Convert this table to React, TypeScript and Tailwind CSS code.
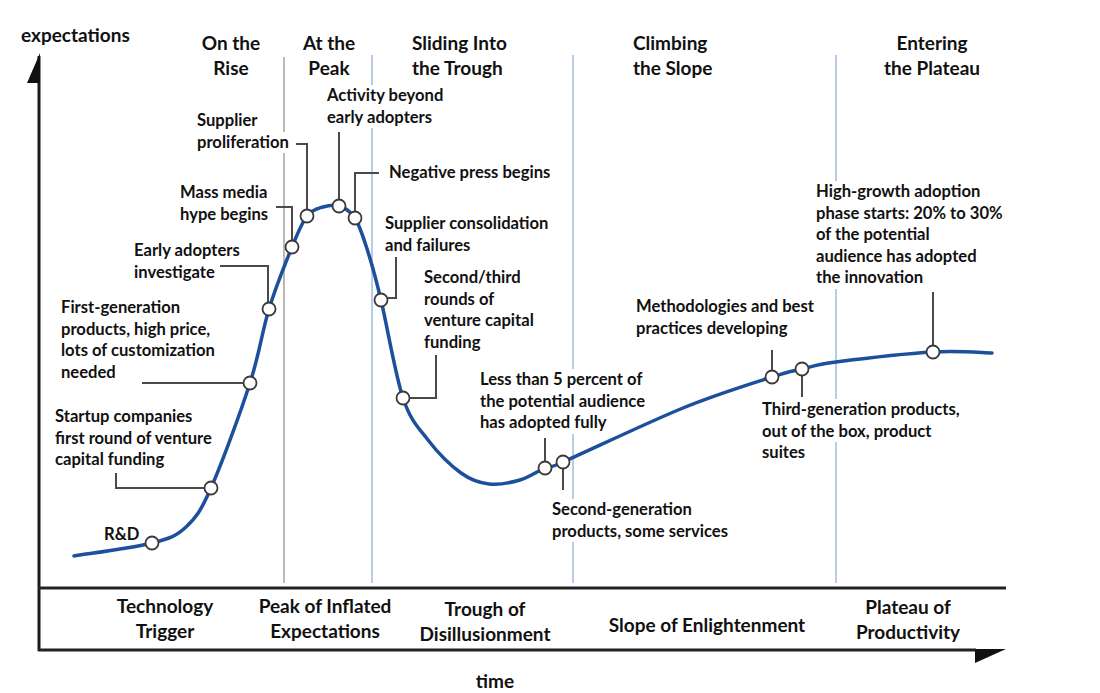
import React from 'react'

type Pt = [number, number]

// points the curve runs through (circles sit on some of them)
const curvePts: Pt[] = [
  [74, 556], [152, 543], [186, 527], [211, 488], [250, 383], [269, 309], [292, 247],
  [307, 216], [323, 207], [339, 206], [355, 218], [368, 252], [381, 300], [403, 398],
  [428, 440], [461, 473], [489, 484], [520, 480], [545, 468], [563, 462], [683, 408],
  [772, 377], [802, 369], [836, 362], [933, 352], [992, 353],
]

const toPath = (pts: Pt[]) => {
  let d = `M${pts[0][0]},${pts[0][1]}`
  for (let i = 0; i < pts.length - 1; i++) {
    const p0 = pts[i - 1] ?? pts[i]
    const p1 = pts[i]
    const p2 = pts[i + 1]
    const p3 = pts[i + 2] ?? p2
    const c1x = p1[0] + (p2[0] - p0[0]) / 6
    const c1y = p1[1] + (p2[1] - p0[1]) / 6
    const c2x = p2[0] - (p3[0] - p1[0]) / 6
    const c2y = p2[1] - (p3[1] - p1[1]) / 6
    d += ` C${c1x},${c1y} ${c2x},${c2y} ${p2[0]},${p2[1]}`
  }
  return d
}

const dots: Pt[] = [
  [152, 543], [211, 488], [250, 383], [269, 309], [292, 247], [307, 216], [339, 206],
  [355, 218], [381, 300], [403, 398], [545, 468], [563, 462], [772, 377], [802, 369], [933, 352],
]

const leaders = [
  'M116,473 V488 H205',
  'M142,383 H244',
  'M220,266 H268 V303',
  'M276,207 H292 V241',
  'M296,144 H307 V210',
  'M339,132 V200',
  'M379,173 H355 V212',
  'M396,257 V298 H387',
  'M436,355 V398 H409',
  'M545,438 V462',
  'M563,468 V490',
  'M772,350 V371',
  'M802,375 V397',
  'M933,292 V346',
]

const notes: { x: number; y: number; lines: string[] }[] = [
  { x: 104, y: 524, lines: ['R&D'] },
  { x: 55, y: 406, lines: ['Startup companies', 'first round of venture', 'capital funding'] },
  { x: 61, y: 297, lines: ['First-generation', 'products, high price,', 'lots of customization', 'needed'] },
  { x: 134, y: 240, lines: ['Early adopters', 'investigate'] },
  { x: 180, y: 182, lines: ['Mass media', 'hype begins'] },
  { x: 197, y: 110, lines: ['Supplier', 'proliferation'] },
  { x: 327, y: 85, lines: ['Activity beyond', 'early adopters'] },
  { x: 389, y: 162, lines: ['Negative press begins'] },
  { x: 385, y: 213, lines: ['Supplier consolidation', 'and failures'] },
  { x: 424, y: 267, lines: ['Second/third', 'rounds of', 'venture capital', 'funding'] },
  { x: 480, y: 369, lines: ['Less than 5 percent of', 'the potential audience', 'has adopted fully'] },
  { x: 552, y: 499, lines: ['Second-generation', 'products, some services'] },
  { x: 636, y: 296, lines: ['Methodologies and best', 'practices developing'] },
  { x: 762, y: 399, lines: ['Third-generation products,', 'out of the box, product', 'suites'] },
  {
    x: 816,
    y: 181,
    lines: ['High-growth adoption', 'phase starts: 20% to 30%', 'of the potential', 'audience has adopted', 'the innovation'],
  },
]

const phases = [
  { cx: 231, lines: ['On the', 'Rise'] },
  { cx: 329, lines: ['At the', 'Peak'] },
  { cx: 412, lines: ['Sliding Into', 'the Trough'], left: true },
  { cx: 633, lines: ['Climbing', 'the Slope'], left: true },
  { cx: 932, lines: ['Entering', 'the Plateau'] },
]

const stages = [
  { cx: 165, y: 593, lines: ['Technology', 'Trigger'] },
  { cx: 325, y: 593, lines: ['Peak of Inflated', 'Expectations'] },
  { cx: 485, y: 596, lines: ['Trough of', 'Disillusionment'] },
  { cx: 707, y: 612, lines: ['Slope of Enlightenment'] },
  { cx: 908, y: 594, lines: ['Plateau of', 'Productivity'] },
]

export default function App() {
  return (
    <div className="relative w-[1100px] h-[693px] overflow-hidden bg-white font-['Lato',sans-serif] font-bold text-[#111]">
      <svg className="absolute inset-0" width="1100" height="693" viewBox="0 0 1100 693">
        {/* phase dividers */}
        <line x1="284" y1="57" x2="284" y2="583" stroke="#b9b9b9" strokeWidth="2" />
        <line x1="372" y1="55" x2="372" y2="583" stroke="#b9cce6" strokeWidth="2" />
        <line x1="573" y1="55" x2="573" y2="583" stroke="#b9cce6" strokeWidth="2" />
        <line x1="836" y1="55" x2="836" y2="583" stroke="#b9cce6" strokeWidth="2" />

        {/* axes */}
        <line x1="39" y1="56" x2="39" y2="651" stroke="#1a1a1a" strokeWidth="3" />
        <polygon points="27,83 40,53 40,83" fill="#111" />
        <line x1="38" y1="588" x2="1006" y2="588" stroke="#222" strokeWidth="3" />
        <line x1="38" y1="650" x2="976" y2="650" stroke="#222" strokeWidth="3" />
        <polygon points="975,649 1006,649 975,663" fill="#111" />

        {/* leaders */}
        {leaders.map((d, i) => (
          <path key={i} d={d} fill="none" stroke="#4a4a4a" strokeWidth="2" />
        ))}
      </svg>

      {notes.map((n, i) => (
        <div
          key={i}
          className="absolute text-[16.6px] leading-[21.5px] whitespace-nowrap"
          style={{ left: n.x, top: n.y }}
        >
          {n.lines.map((l, j) => (
            <div key={j} className="w-fit bg-white">
              {l}
            </div>
          ))}
        </div>
      ))}

      <svg className="absolute inset-0 pointer-events-none" width="1100" height="693" viewBox="0 0 1100 693">
        <path d={toPath(curvePts)} fill="none" stroke="#1c4f9c" strokeWidth="3.5" strokeLinecap="round" />
        {dots.map(([x, y], i) => (
          <circle key={i} cx={x} cy={y} r="6.5" fill="#fff" stroke="#3a3a3a" strokeWidth="1.8" />
        ))}
      </svg>

      <div className="absolute left-[21px] top-[23px] text-[19px] leading-[24px]">expectations</div>

      {phases.map((p, i) => (
        <div
          key={i}
          className={
            p.left
              ? 'absolute top-[30px] text-[19px] leading-[25px] whitespace-nowrap'
              : 'absolute top-[30px] -translate-x-1/2 text-center text-[19px] leading-[25px] whitespace-nowrap'
          }
          style={{ left: p.cx }}
        >
          {p.lines.map((l, j) => (
            <div key={j}>{l}</div>
          ))}
        </div>
      ))}

      {stages.map((s, i) => (
        <div
          key={i}
          className="absolute -translate-x-1/2 text-center text-[19px] leading-[25px] whitespace-nowrap"
          style={{ left: s.cx, top: s.y }}
        >
          {s.lines.map((l, j) => (
            <div key={j}>{l}</div>
          ))}
        </div>
      ))}

      <div className="absolute left-[495px] top-[669px] -translate-x-1/2 text-[19px] leading-[24px]">time</div>
    </div>
  )
}
